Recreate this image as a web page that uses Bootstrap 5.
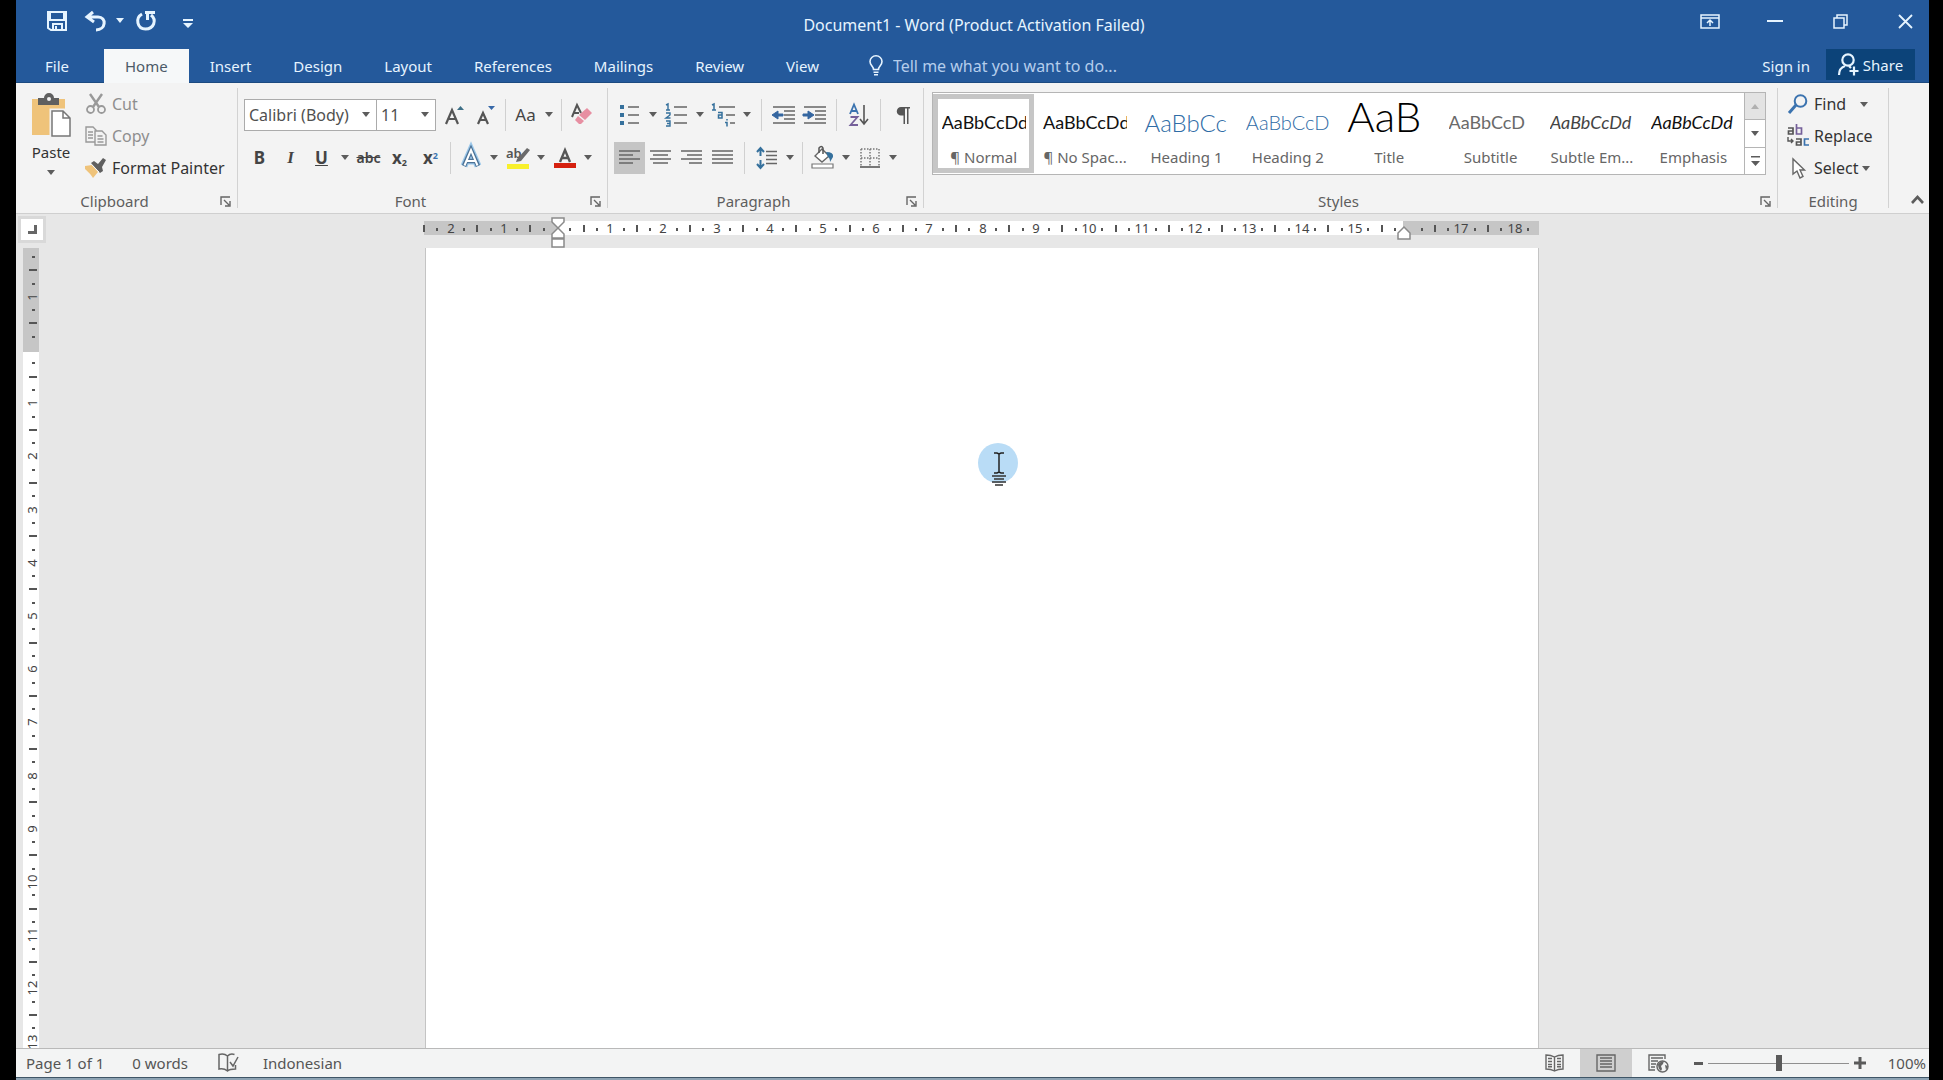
<!DOCTYPE html>
<html lang="en">
<head>
<meta charset="utf-8">
<meta name="viewport" content="width=device-width, initial-scale=1">
<title>Document1 - Word</title>
<link rel="stylesheet" href="https://cdn.jsdelivr.net/npm/bootstrap@5.3.0/dist/css/bootstrap.min.css">
<style>
  :root { --brand:#24599b; --brand-dark:#0c4379; --ink:#444; --line:#c8c8c8; --ribbon-bg:#f3f3f3; --accent:#3b73af; }
  body { background:#000; color:var(--ink); font-family:"Noto Sans","Open Sans",sans-serif; font-size:15px; line-height:20px; overflow:hidden; }
  svg { display:block; flex:none; overflow:visible; }
  button { color:inherit; }
  .app-shell { margin:0 14px 0 16px; min-height:100vh; background:#e7e7e7; }

  /* title bar */
  .title-row { background:var(--brand); color:#e6f4ff; height:49px; }
  .title-side { flex:1 1 0; }
  .title-text { font-size:16px; padding-top:1px; padding-left:3px; }
  .quick-btn { background:none; border:0; padding:0; height:34px; margin-top:4px; display:flex; align-items:center; justify-content:center; }
  .win-btn { width:48px; }
  .tab-row { background:var(--brand); color:#e6f4ff; height:34px; border-bottom:1px solid #1c4a80; }
  .tab-row .nav-link { color:#e6f4ff; padding:0 21px; height:34px; line-height:34px; }
  .tab-row .nav-link.active { background:#f6f8f9; color:#4b5a68; }
  .tab-row .file-link { padding:0 35px 0 29px; }
  .tell-label { column-gap:10px; padding-left:29px; }
  .tell-box { background:none; border:0; color:#b4cdec; font-size:16px; width:260px; padding:0; outline:0; }
  .tell-box::placeholder { color:#b4cdec; opacity:1; }
  .share-btn { background:var(--brand-dark); border:0; height:31px; width:89px; color:#e6f4ff; margin-right:14px; }

  /* ribbon */
  .ribbon { background:var(--ribbon-bg); padding:5px 0; border-bottom:1px solid #cfcfcf; }
  .ribbon-group { border-right:1px solid #d2d2d2; height:120px; display:flex; flex-direction:column; }
  .g-clip { width:222px; } .g-font { width:370px; } .g-para { width:316px; } .g-edit { width:111px; }
  .group-foot { display:flex; line-height:14px; height:14px; margin-top:auto; color:#5e5e5e; }
  .group-foot span { flex:1; text-align:center; }
  .launch { width:24px; border:0; background:none; padding:0; display:flex; align-items:center; justify-content:center; }
  .cmd { border:0; background:none; padding:0; height:32px; display:flex; align-items:center; gap:6px; font-size:16px; color:#333; white-space:nowrap; }
  .cmd.dim { color:#8e8e8e; }
  .cmd .ico { width:20px; display:flex; justify-content:center; }
  .paste-btn { width:70px; border:0; background:none; padding:6px 0 0; color:#333; display:flex; flex-direction:column; align-items:center; }
  .tool-rows { padding:11px 0 0 6px; display:flex; flex-direction:column; gap:12px; }
  .tool-line { display:flex; align-items:center; height:31px; }
  .tool { width:31px; height:32px; border:0; padding:0; background:none; display:flex; align-items:center; justify-content:center; flex:none; line-height:20px; font-size:17px; }
  .tool.on { background:#c5c5c5; }
  .strike { font-size:14px; font-weight:600; text-decoration:line-through; }
  .tiny-mark { font-size:9px; } .tiny-mark.up { color:var(--accent); }
  .drop { width:16px; height:32px; border:0; padding:0; background:none; display:flex; align-items:center; justify-content:center; flex:none; }
  .caret::before { content:""; border:4px solid transparent; border-top:5px solid #5c5c5c; border-bottom:0; display:block; }
  .caret.light::before { border-top-color:#e6f4ff; }
  .vline { width:1px; height:32px; background:#d0d0d0; margin:0 6px; flex:none; }
  .vline.tight { margin:0 4px; }
  .font-pick { height:32px; border:1px solid #ababab; border-radius:0; padding:0 20px 0 4px; font-size:16px; line-height:28px; color:#505050;
    --bs-form-select-bg-img:url("data:image/svg+xml,%3csvg xmlns='http://www.w3.org/2000/svg' viewBox='0 0 8 5'%3e%3cpath fill='%235c5c5c' d='M0 0h8L4 5z'/%3e%3c/svg%3e");
    background-size:8px 5px; background-position:right 6px center; }
  .pick-name { width:133px; } .pick-size { width:60px; margin-left:-1px; margin-right:3px; }

  /* style gallery */
  .gallery { margin:4px 11px 0 8px; border:1px solid #b5b5b5; background:#fff; height:83px; display:flex; }
  .style-cell { flex:1 1 0; min-width:0; border:0; background:none; padding:6px 5px 0; height:79px; margin-top:1px; display:flex; flex-direction:column; align-items:center; color:#666; white-space:nowrap; }
  .style-cell.on { border:5px solid #c6c6c6; padding:1px 0 0; }
  .sample { width:84px; height:47px; overflow:hidden; text-align:left; font-family:Lato,"Open Sans",sans-serif; font-size:18px; line-height:45px; color:#111; flex:none; }
  .s-h1 { font-size:24px; font-weight:300; color:#2f6ca6; } .s-h2 { font-size:20px; font-weight:300; color:#2f6ca6; }
  .s-title { font-size:42px; line-height:33px; font-weight:300; color:#000; }
  .s-sub { color:#6a6a6a; } .s-em { color:#444; font-style:italic; } .s-em2 { font-style:italic; }
  .roll { width:21px; border-left:1px solid #b5b5b5; display:flex; flex-direction:column; }
  .roll button { flex:1; border:0; border-bottom:1px solid #b5b5b5; background:#fff; padding:0; display:flex; align-items:center; justify-content:center; }
  .roll button:last-child { border-bottom:0; }
  .roll button:disabled { background:#e3e3e3; }

  /* workspace */
  .workspace { min-height:0; overflow:hidden; }
  .ruler-col { width:28px; padding:5px 0 0 5px; }
  .tab-stop { width:22px; height:21px; border:0; background:#fff; box-shadow:0 0 0 3px #d9d9d9; padding:0; display:flex; align-items:center; justify-content:center; margin-bottom:8px; }
  .v-ruler { margin-left:2px; }
  .desk { padding:3px 10px 0 0; min-width:0; }
  .paper { width:1115px; position:relative; }
  .sheet { background:#fff; border:1px solid #c4c4c4; border-width:0 1px; margin-left:1px; }
  .ruler-num { font:13px "Noto Sans",sans-serif; fill:#444; text-anchor:middle; }
  .pointer { position:absolute; left:554px; top:226px; }

  /* status bar */
  .status { background:#f3f4f4; border-top:1px solid #b9b9b9; height:29px; color:#555; padding:0 3px 0 10px; }
  .proof-ico { margin:0 24px 0 30px; }
  .view-btn { border:0; background:none; width:52px; height:28px; padding:0; display:flex; align-items:center; justify-content:center; }
  .view-btn.on { background:#cfcfcf; }
  .zoom-btn { border:0; background:none; padding:0; width:12px; height:20px; display:flex; align-items:center; justify-content:center; }
  .zoom-range { appearance:none; width:141px; height:18px; background:linear-gradient(#8f8f8f,#8f8f8f) center/100% 1px no-repeat; margin:0 5px 0 4px; }
  .zoom-range::-webkit-slider-thumb { appearance:none; width:6px; height:16px; background:#5a5a5a; border:0; border-radius:0; }
  .zoom-value { width:60px; }
  .under-edge { height:3px; background:#8ea3b3; border-top:1px solid #3f5566; }
</style>
<script src="https://cdn.jsdelivr.net/npm/bootstrap@5.3.0/dist/js/bootstrap.bundle.min.js"></script>
</head>
<body>
<div class="app-shell d-flex flex-column vh-100">
  <header>
    <div class="title-row d-flex">
      <div class="title-side d-flex">
        <button class="quick-btn ms-3 ps-3 pe-3" aria-label="Save" type="button">
          <svg width="20" height="20" viewBox="1 0 20 20" fill="none" stroke="#e6f4ff" stroke-width="2"><path d="M1 1h18v18H4l-3-2z"/><path d="M3 1v8h14V1M6 19v-6h9v6M9 19v-4"/></svg></button>
        <button class="quick-btn" aria-label="Undo" type="button">
          <svg width="24" height="20" viewBox="0 0 22 20" fill="none" stroke="#e6f4ff" stroke-width="3"><path d="M8 1L2 6l7 5M3 6h10c9 0 8 13-2 13"/></svg></button>
        <button class="quick-btn drop caret light ms-1" aria-label="Undo list" type="button"></button>
        <button class="quick-btn px-2" aria-label="Repeat" type="button">
          <svg width="20" height="20" viewBox="0 0 20 20" fill="none" stroke="#e6f4ff" stroke-width="3"><path d="M6 3C-1 7 1 18 9.500 18S21 9 15 4"/><path d="M9 1.500h10M11.500 2v7"/></svg></button>
        <button class="quick-btn px-3 ms-1" aria-label="Customize toolbar" type="button">
          <svg width="8" height="12" viewBox="1 0 8 12" fill="#e6f4ff"><path d="M0 4h10v2H0zM0 8h10L5 13z"/></svg></button>
      </div>
      <div class="title-text d-flex align-items-center"><span>Document1 - Word (Product Activation Failed)</span></div>
      <div class="title-side d-flex justify-content-end" style="column-gap:17px">
        <button class="quick-btn win-btn" aria-label="Ribbon display" type="button"><svg width="20" height="15" viewBox="0 0 20 15" fill="none" stroke="#e6f4ff" stroke-width="1.500"><path d="M1 1h18v13H1zM1 4h18M10 12V6M7 9l3-3 3 3"/></svg></button>
        <button class="quick-btn win-btn" aria-label="Minimize" type="button"><svg width="16" height="2"><path d="M0 1h16" stroke="#e6f4ff" stroke-width="2"/></svg></button>
        <button class="quick-btn win-btn" aria-label="Restore" type="button"><svg width="15" height="15" viewBox="0 0 15 15" fill="none" stroke="#e6f4ff" stroke-width="1.500"><path d="M1 4h10v10H1zM4 4V1h10v10h-3"/></svg></button>
        <button class="quick-btn win-btn" aria-label="Close" type="button"><svg width="15" height="15" viewBox="0 0 15 15" stroke="#e6f4ff" stroke-width="1.800"><path d="M1 1l13 13M14 1L1 14"/></svg></button>
      </div>
    </div>
    <nav class="tab-row d-flex">
      <div class="nav flex-nowrap">
        <a class="nav-link file-link" href="#">File</a>
        <a class="nav-link active" aria-current="page" href="#">Home</a>
        <a class="nav-link" href="#">Insert</a>
        <a class="nav-link" href="#">Design</a>
        <a class="nav-link" href="#">Layout</a>
        <a class="nav-link" href="#">References</a>
        <a class="nav-link" href="#">Mailings</a>
        <a class="nav-link" href="#">Review</a>
        <a class="nav-link" href="#">View</a>
      </div>
      <label class="tell-label d-flex align-items-center" for="tell">
        <svg width="14" height="21" viewBox="0 0 14 21" fill="none" stroke="#e6f4ff" stroke-width="1.600"><path d="M4.500 14.500c0-3-3.500-4-3.500-8a6 5.700 0 0112 0c0 4-3.500 5-3.500 8zM4.500 17.300h5M5 19.800h4"/></svg>
        <input class="tell-box" id="tell" type="text" placeholder="Tell me what you want to do...">
      </label>
      <a class="nav-link ms-auto px-0 me-3" href="#">Sign in</a>
      <button class="share-btn d-flex align-items-center justify-content-center gap-1" type="button">
        <svg width="21" height="23" viewBox="0 0 21 23" fill="none" stroke="#e6f4ff" stroke-width="2.200"><circle cx="10" cy="7" r="5.700"/><path d="M1 22c0-5 3-8 6-9M11 13l2 2M11.500 18h9M16 13.500v9"/></svg>
        <span>Share</span></button>
    </nav>
  </header>

  <section class="ribbon d-flex" aria-label="Home tools">
    <div class="ribbon-group g-clip">
      <div class="d-flex">
        <button class="paste-btn" type="button">
          <svg width="42" height="44" viewBox="0 0 42 44"><path d="M2 5h33v36H2z" fill="#efc37a"/><path d="M8 4h6a5 5 0 0110 0h5v7H8z" fill="#5f5f5f"/><circle cx="19" cy="5" r="2" fill="#f3f3f3"/><path d="M21 16h13l7 7v20H21z" fill="#fff" stroke="#f3f3f3" stroke-width="3"/><path d="M22 17h11l7 7v18H22zM33 17v7h7" fill="#fff" stroke="#777" stroke-width="1.500"/></svg>
          <span class="mt-1">Paste</span><span class="caret pt-2"></span></button>
        <div>
          <button class="cmd dim" type="button"><span class="ico"><svg width="20" height="20" viewBox="0 0 20 20" fill="none" stroke="#999" stroke-width="1.800"><path d="M4 0l9 13M16 0L7 13" stroke-width="2.400"/><circle cx="4.500" cy="15.500" r="3.500"/><circle cx="15.500" cy="15.500" r="3.500"/></svg></span>Cut</button>
          <button class="cmd dim" type="button"><span class="ico"><svg width="22" height="20" viewBox="0 0 22 20" fill="#f3f3f3" stroke="#999" stroke-width="1.400"><path d="M1 1h7l3 3v12H1zM3 6h5M3 9h5M3 12h5"/><path d="M10 5h7l4 4v10H10zM12.500 10h5M12.500 13h6M12.500 16h6"/></svg></span>Copy</button>
          <button class="cmd" type="button"><span class="ico"><svg width="22" height="20" viewBox="0 0 22 20"><path d="M0 8l7-1 6 7-5 6C5 15 2 13 0 11z" fill="#efc37a"/><path d="M6 5l3-2 4 3 5-6 3 2-4 7 1 4-3 2z" fill="#5f5f5f"/><path d="M7 7l7 7" stroke="#f3f3f3"/></svg></span>Format Painter</button>
        </div>
      </div>
      <div class="group-foot"><span>Clipboard</span><button class="launch" aria-label="Clipboard options" type="button"><svg width="11" height="11" viewBox="0 0 11 11" fill="none" stroke="#666" stroke-width="1.400"><path d="M1 9V1h9M4 4l5 5M10 5v5H5"/></svg></button></div>
    </div>

    <div class="ribbon-group g-font">
      <div class="tool-rows">
        <div class="tool-line">
          <select class="form-select font-pick pick-name" aria-label="Font"><option>Calibri (Body)</option></select>
          <select class="form-select font-pick pick-size" aria-label="Font size"><option>11</option></select>
          <button class="tool" aria-label="Grow font" type="button"><svg width="20" height="20" viewBox="0 0 20 20"><path d="M1 19L7 5l6 14M3.500 14h7" fill="none" stroke="#555" stroke-width="2.200"/><path d="M12 5l3.500-4L19 5z" fill="#3d6f86"/></svg></button>
          <button class="tool" aria-label="Shrink font" type="button"><svg width="20" height="20" viewBox="0 0 20 20"><path d="M2 19L7 8l5 11M4 15h6" fill="none" stroke="#555" stroke-width="2.200"/><path d="M12 1h7l-3.500 4z" fill="#3768a8"/></svg></button>
          <span class="vline tight"></span>
          <button class="tool" type="button">Aa</button><button class="drop caret" aria-label="Case options" type="button"></button>
          <span class="vline tight"></span>
          <button class="tool" aria-label="Clear formatting" type="button"><svg width="22" height="22" viewBox="0 0 22 22"><path d="M1 13L6 1l4 8M3 9h5" fill="none" stroke="#555" stroke-width="2"/><path d="M16 4l5 5-7 7-6-5z" fill="#e78fa2"/><path d="M7 12l6 5-3 3H8l-4-4z" fill="#e78fa2"/></svg></button>
        </div>
        <div class="tool-line">
          <button class="tool fw-bold" type="button">B</button>
          <button class="tool fw-bold fst-italic" type="button" style="font-family:'Liberation Serif',serif">I</button>
          <button class="tool fw-bold text-decoration-underline" type="button">U</button><button class="drop caret" aria-label="Underline options" type="button"></button>
          <button class="tool" type="button"><span class="strike">abc</span></button>
          <button class="tool fw-bold" type="button"><span>x<sub class="tiny-mark">2</sub></span></button>
          <button class="tool fw-bold" type="button"><span>x<sup class="tiny-mark up">2</sup></span></button>
          <span class="vline tight"></span>
          <button class="tool" aria-label="Text effects" type="button"><svg width="20" height="21" viewBox="0 0 20 21" fill="none"><path d="M3 19L10 3l7 16M6 14h8" stroke="#9cc8ea" stroke-width="7"/><path d="M3 19L10 3l7 16M6 14h8" stroke="#4c7296" stroke-width="4.500"/><path d="M3.500 18.500L10 3l6.500 15.500M6 14h8" stroke="#fff" stroke-width="2"/></svg></button><button class="drop caret" aria-label="Effect options" type="button"></button>
          <button class="tool" aria-label="Highlight" type="button"><svg width="24" height="24" viewBox="0 0 24 24"><text x="0" y="12" font-family="Noto Sans" font-size="13" font-weight="600" fill="#555">ab</text><path d="M21 2l3 2-9 11-5 1 1-3z" fill="#6a6a6a"/><path d="M1 18h22v5H1z" fill="#f8f02c"/></svg></button><button class="drop caret" aria-label="Highlight colors" type="button"></button>
          <button class="tool" aria-label="Font color" type="button"><svg width="24" height="22" viewBox="0 0 24 22"><path d="M7 15L12 3l5 12M8.500 11h7" fill="none" stroke="#555" stroke-width="2.400"/><path d="M1 16h22v5H1z" fill="#d5200e"/></svg></button><button class="drop caret" aria-label="Font colors" type="button"></button>
        </div>
      </div>
      <div class="group-foot"><span>Font</span><button class="launch" aria-label="Font options" type="button"><svg width="11" height="11" viewBox="0 0 11 11" fill="none" stroke="#666" stroke-width="1.400"><path d="M1 9V1h9M4 4l5 5M10 5v5H5"/></svg></button></div>
    </div>

    <div class="ribbon-group g-para">
      <div class="tool-rows">
        <div class="tool-line">
          <button class="tool" aria-label="Bullets" type="button"><svg width="20" height="22" viewBox="0 0 20 22"><path d="M0 1h4v4H0zM0 9h4v4H0zM0 17h4v4H0z" fill="#35709c"/><path d="M8 3h11M8 11h11M8 19h11" stroke="#666" stroke-width="1.600"/></svg></button><button class="drop caret" aria-label="Bullet library" type="button"></button>
          <button class="tool" aria-label="Numbering" type="button"><svg width="21" height="24" viewBox="0 0 21 24"><path d="M0 2l2-1v6M0 7h4M0 10h4v2L0 15h4.500M0 18h4v5H0M1 20.500h3" fill="none" stroke="#35709c" stroke-width="1.400"/><path d="M8 4h13M8 12h13M8 20h13" stroke="#666" stroke-width="1.600"/></svg></button><button class="drop caret" aria-label="Number library" type="button"></button>
          <button class="tool" aria-label="Multilevel list" type="button"><svg width="24" height="24" viewBox="0 0 24 24"><path d="M0 2l2-1v6M0 7h4M6 9.500h4v5.500H6.500V12H10M15 16v1.500M13 19.500h2v4" fill="none" stroke="#35709c" stroke-width="1.500"/><path d="M7 4h16M14 12h9M18 20h5" stroke="#666" stroke-width="1.600"/></svg></button><button class="drop caret" aria-label="List library" type="button"></button>
          <span class="vline"></span>
          <button class="tool" aria-label="Decrease indent" type="button"><svg width="24" height="20" viewBox="0 0 24 20"><path d="M1 2h22M12 6h11M12 10h11M12 14h11M1 18h22" stroke="#666" stroke-width="1.500"/><path d="M0 10l6-4v3h5v2H6v3z" stroke="#3566a0" fill="#3566a0"/></svg></button>
          <button class="tool" aria-label="Increase indent" type="button"><svg width="24" height="20" viewBox="0 0 24 20"><path d="M1 2h22M12 6h11M12 10h11M12 14h11M1 18h22" stroke="#666" stroke-width="1.500"/><path d="M11 10L5 6v3H0v2h5v3z" stroke="#3566a0" fill="#3566a0"/></svg></button>
          <span class="vline"></span>
          <button class="tool" aria-label="Sort" type="button"><svg width="20" height="24" viewBox="0 0 20 24" fill="none" stroke-width="1.800"><path d="M1 11L5 1.500 9 11M2.500 8h5" stroke="#3b73af"/><path d="M1.500 14h7L1.500 22h7.500" stroke="#75609a"/><path d="M15 2v18M11 16l4 5 4-5" stroke="#555" stroke-width="1.600"/></svg></button>
          <span class="vline"></span>
          <button class="tool" aria-label="Show marks" type="button"><svg width="14" height="18" viewBox="0 0 14 18"><path d="M5 1h9v1.500h-1.500V18H11V2.500H9V18H7.500V9.500H5A4.200 4.200 0 015 1z" fill="#555"/></svg></button>
        </div>
        <div class="tool-line">
          <button class="tool on" aria-label="Align left" type="button"><svg width="21" height="15" viewBox="0 0 21 15" stroke="#666" stroke-width="1.500"><path d="M0 1h21M0 5h14M0 9h21M0 13h14"/></svg></button>
          <button class="tool" aria-label="Center" type="button"><svg width="21" height="15" viewBox="0 0 21 15" stroke="#666" stroke-width="1.500"><path d="M0 1h21M3 5h15M0 9h21M3 13h15"/></svg></button>
          <button class="tool" aria-label="Align right" type="button"><svg width="21" height="15" viewBox="0 0 21 15" stroke="#666" stroke-width="1.500"><path d="M0 1h21M6 5h15M0 9h21M8 13h13"/></svg></button>
          <button class="tool" aria-label="Justify" type="button"><svg width="21" height="15" viewBox="0 0 21 15" stroke="#666" stroke-width="1.500"><path d="M0 1h21M0 5h21M0 9h21M0 13h21"/></svg></button>
          <span class="vline"></span>
          <button class="tool" aria-label="Line spacing" type="button"><svg width="21" height="22" viewBox="0 0 21 22" fill="none"><path d="M4.500 1v8M1 5l3.500-4L8 5M4.500 13v8M1 17l3.500 4L8 17" stroke="#35709c" stroke-width="2"/><path d="M10 4.500h11M10 8.500h11M10 12.500h11M10 16.500h11" stroke="#666" stroke-width="1.500"/></svg></button><button class="drop caret" aria-label="Spacing options" type="button"></button>
          <span class="vline tight"></span>
          <button class="tool" aria-label="Shading" type="button"><svg width="24" height="23" viewBox="0 0 24 23" fill="none"><path d="M4 10l7-7 7 7-7 6z" fill="#fff" stroke="#666" stroke-width="1.400"/><path d="M8 7V2q2.500-3 4 0v6" stroke="#555" stroke-width="1.500"/><path d="M15 6q8 0 7 5l-3 5q0-4-2-5z" fill="#35709c"/><path d="M1 18h21v4H1z" fill="#fff" stroke="#777" stroke-width="1.200"/></svg></button><button class="drop caret" aria-label="Shading colors" type="button"></button>
          <button class="tool" aria-label="Borders" type="button"><svg width="20" height="20" viewBox="0 0 20 20" fill="none" stroke="#777" stroke-width="1.500"><path d="M1 1h18M1 10h18M1 1v17M10 1v17M19 1v17" stroke-dasharray="1.500 1.500"/><path d="M0 19h20" stroke-width="2"/></svg></button><button class="drop caret" aria-label="Border options" type="button"></button>
        </div>
      </div>
      <div class="group-foot"><span>Paragraph</span><button class="launch" aria-label="Paragraph options" type="button"><svg width="11" height="11" viewBox="0 0 11 11" fill="none" stroke="#666" stroke-width="1.400"><path d="M1 9V1h9M4 4l5 5M10 5v5H5"/></svg></button></div>
    </div>

    <div class="ribbon-group flex-grow-1">
      <div class="gallery">
        <button class="style-cell on" type="button"><span class="sample">AaBbCcDd</span><span>¶ Normal</span></button>
        <button class="style-cell" type="button"><span class="sample">AaBbCcDd</span><span>¶ No Spac...</span></button>
        <button class="style-cell" type="button"><span class="sample s-h1">AaBbCc</span><span>Heading 1</span></button>
        <button class="style-cell" type="button"><span class="sample s-h2">AaBbCcD</span><span>Heading 2</span></button>
        <button class="style-cell" type="button"><span class="sample s-title">AaB</span><span>Title</span></button>
        <button class="style-cell" type="button"><span class="sample s-sub">AaBbCcD</span><span>Subtitle</span></button>
        <button class="style-cell" type="button"><span class="sample s-em">AaBbCcDd</span><span>Subtle Em...</span></button>
        <button class="style-cell" type="button"><span class="sample s-em2">AaBbCcDd</span><span>Emphasis</span></button>
        <div class="roll">
          <button disabled aria-label="Scroll up" type="button"><svg width="8" height="5"><path d="M0 5h8L4 0z" fill="#b0b0b0"/></svg></button>
          <button aria-label="Scroll down" type="button"><svg width="8" height="5"><path d="M0 0h8L4 5z" fill="#5c5c5c"/></svg></button>
          <button aria-label="More styles" type="button"><svg width="9" height="10"><path d="M0 0h9v1.500H0zM0 5h9L4.500 10z" fill="#5c5c5c"/></svg></button>
        </div>
      </div>
      <div class="group-foot"><span>Styles</span><button class="launch" aria-label="Style options" type="button"><svg width="11" height="11" viewBox="0 0 11 11" fill="none" stroke="#666" stroke-width="1.400"><path d="M1 9V1h9M4 4l5 5M10 5v5H5"/></svg></button></div>
    </div>

    <div class="ribbon-group g-edit">
      <div style="padding-left:10px">
        <button class="cmd" type="button"><span class="ico"><svg width="20" height="20" viewBox="0 0 20 20" fill="none" stroke="#3b73af"><circle cx="12.500" cy="7" r="5.800" stroke-width="2"/><path d="M8 11l-7 8" stroke-width="3"/></svg></span>Find<span class="caret ps-1 ms-1"></span></button>
        <button class="cmd" type="button"><span class="ico"><svg width="22" height="24" viewBox="0 0 22 24" fill="none" stroke-width="1.700"><path d="M1 4h5v6H1.500V7H6" stroke="#555"/><path d="M9.500 0v10h5V4h-5" stroke="#75609a"/><path d="M9 15h5v6H9.500v-3H14" stroke="#555"/><path d="M22 15h-4.500v6H22" stroke="#3b73af"/><path d="M1 13v4h5M4 15l2 2-2 2" stroke="#555" stroke-width="1.400"/></svg></span>Replace</button>
        <button class="cmd" type="button"><span class="ico"><svg width="13" height="21" viewBox="0 0 13 21" fill="#fff" stroke="#666" stroke-width="1.400"><path d="M1 1v15l4-3 3 7 3-1.500-3-6.500h4.500z"/></svg></span><span class="d-flex align-items-center">Select<span class="caret ps-1"></span></span></button>
      </div>
      <div class="group-foot"><span>Editing</span></div>
    </div>
    <button class="launch align-self-end ms-3 mb-1" aria-label="Collapse ribbon" type="button"><svg width="13" height="9" viewBox="0 0 13 9" fill="none" stroke="#5c5c5c" stroke-width="2.600"><path d="M1 8l5.500-6L12 8"/></svg></button>
  </section>

  <main class="workspace d-flex flex-grow-1">
    <div class="ruler-col">
      <button class="tab-stop" aria-label="Tab stop" type="button"><svg width="9" height="9"><path d="M7.500 0v7.500H0" fill="none" stroke="#666" stroke-width="3"/></svg></button>
      <svg class="v-ruler" id="vRuler" width="16" height="800"><path d="M0 0h16v104H0z" fill="#c6c6c6"/><path d="M0 104h16v696H0z" fill="#fff"/></svg>
    </div>
    <div class="desk flex-grow-1 d-flex justify-content-center">
      <div class="paper d-flex flex-column">
        <svg id="hRuler" width="1115" height="31" viewBox="1 0 1115 31"><path d="M1 4h1115v14H1z" fill="#c6c6c6"/><path d="M134 4h846v14H134z" fill="#fff"/></svg>
        <div class="sheet flex-grow-1" role="textbox" aria-label="Document"></div>
        <svg class="pointer" width="40" height="48" viewBox="0 0 40 48" fill="none"><circle cx="20" cy="20" r="20" fill="#b9dcf6"/><path d="M16 10h3l2 1 2-1h3M21 11v18M16 30h3l2-1 2 1h3" stroke="#222" stroke-width="1.500"/><path d="M14 33h14M16 36h10M14 39h14M17 42h8" stroke="#333" stroke-width="1.500"/></svg>
      </div>
    </div>
  </main>

  <footer>
    <div class="status d-flex align-items-center">
      <span>Page 1 of 1</span>
      <span class="ms-4 ps-1">0 words</span>
      <svg class="proof-ico" width="21" height="20" viewBox="0 0 21 20" fill="none" stroke="#666" stroke-width="1.500"><path d="M9.500 18V3Q6 0 1 1.500V16q5-1 8.500 2 2-2 8-2v-4M9.500 3q3-3 7-1.500M12 9l3 4 5-9"/></svg>
      <span>Indonesian</span>
      <div class="d-flex align-items-center ms-auto">
        <button class="view-btn" aria-label="Read mode" type="button"><svg width="19" height="18" viewBox="0 0 19 18" fill="none" stroke="#666" stroke-width="1.400"><path d="M9.500 3Q6 1 1 1v14q5 0 8.500 2 3.500-2 8.500-2V1q-5 0-8.500 2v14M3 4.500h4M3 7.500h4M3 10.500h4M3 12.800h4M12 4.500h4M12 7.500h4M12 10.500h4M12 12.800h4"/></svg></button>
        <button class="view-btn on" aria-label="Print layout" type="button"><svg width="20" height="18" viewBox="0 0 20 18" fill="none" stroke="#666" stroke-width="1.400"><path d="M1 1h18v16H1zM4 4h12M4 7h12M4 10h12M4 13h12"/></svg></button>
        <button class="view-btn" aria-label="Web layout" type="button"><svg width="21" height="19" viewBox="0 0 21 19" fill="none" stroke="#666" stroke-width="1.400"><path d="M17 5V1H1v15h6M3 4h12M3 7h7M3 10h5M3 13h4"/><circle cx="14.500" cy="12.500" r="5.500" fill="#f3f4f4"/><path d="M10 10q3-3 6-3l-1 3-2 2 1 3-1 2q-3-2-3-7zM17 11l3 1-2 4z" fill="#666" stroke="none"/></svg></button>
        <button class="zoom-btn ms-2" aria-label="Zoom out" type="button"><svg width="9" height="3"><path d="M0 0h9v3H0z" fill="#5a5a5a"/></svg></button>
        <input class="zoom-range" type="range" aria-label="Zoom" min="0" max="100" value="50">
        <button class="zoom-btn" aria-label="Zoom in" type="button"><svg width="12" height="12"><path d="M0 4.500h12v3H0zM4.500 0h3v12h-3z" fill="#5a5a5a"/></svg></button>
        <span class="zoom-value text-end">100%</span>
      </div>
    </div>
    <div class="under-edge"></div>
  </footer>
</div>
<script>
  const NS = "http://www.w3.org/2000/svg", CM = 53.2;
  function add(parent, tag, attrs, text) {
    const el = document.createElementNS(NS, tag);
    for (const k in attrs) el.setAttribute(k, attrs[k]);
    if (text !== undefined) el.textContent = text;
    parent.appendChild(el);
    return el;
  }
  // Quarter marks are dots, half marks are bars, whole centimetres are numbered.
  function marks(svg, zero, from, to, vertical, skip) {
    for (let k = from; k <= to; k++) {
      const p = Math.round(zero + k * CM / 4), kind = Math.abs(k) % 4;
      if (k === 0 || k === skip) continue;
      if (kind === 0) {
        const n = Math.abs(k) / 4;
        add(svg, "text", vertical ? {class:"ruler-num", transform:`translate(14 ${p}) rotate(-90)`} : {class:"ruler-num", x:p, y:16}, n);
      } else {
        const len = kind === 2 ? 8 : 2;
        add(svg, "rect", vertical ? {x:10 - len / 2, y:p - 1, width:kind === 2 ? 8 : 3, height:2, fill:"#555"}
                                  : {x:p - 1, y:12 - len / 2, width:2, height:kind === 2 ? 7 : 3, fill:"#555"});
      }
    }
  }
  const h = document.getElementById("hRuler"), v = document.getElementById("vRuler");
  marks(h, 134, -10, 73, false, 64);
  marks(v, 102, -7, 52, true);
  const mark = {fill:"#fff", stroke:"#8a8a8a", "stroke-width":1.5};
  add(h, "path", {d:"M129 1h12v4l-6 6-6-6zM135 11l6 6v4h-12v-4zM129 22h12v8h-12z", ...mark});
  add(h, "path", {d:"M981 10l6 6v6h-12v-6z", ...mark});
</script>
</body>
</html>
